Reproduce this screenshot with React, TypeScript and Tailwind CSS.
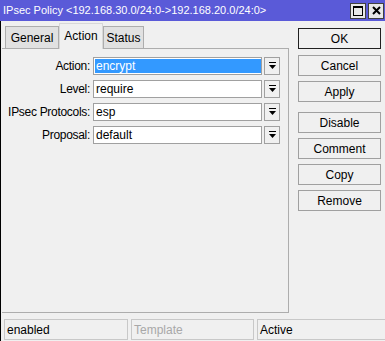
import React from "react";

const DropIcon = () => (
  <svg width="9" height="9" viewBox="0 0 9 9">
    <rect x="1" y="1" width="7" height="1" fill="#000" />
    <path d="M1 4h7L4.5 8z" fill="#000" />
  </svg>
);

const fields = [
  { label: "Action:", value: "encrypt", selected: true },
  { label: "Level:", value: "require" },
  { label: "IPsec Protocols:", value: "esp" },
  { label: "Proposal:", value: "default" },
];

const App = () => {
  return (
    <div
      className="w-[385px] h-[341px] bg-[#f0f0f0] flex flex-col overflow-hidden text-[11px] text-black"
      style={{ fontFamily: '"Liberation Sans", Arial, sans-serif' }}
    >
      {/* title bar */}
      <div className="h-[21px] bg-[#5a5ad8] flex items-center pl-[3px] pr-[1px] text-white text-[11px] shrink-0">
        <span className="flex-1 truncate">IPsec Policy &lt;192.168.30.0/24:0-&gt;192.168.20.0/24:0&gt;</span>
        <div className="flex gap-[2px]">
          <div className="w-[16px] h-[16px] bg-[#e8e8e8] border border-[#404040] flex items-center justify-center">
            <div className="w-[10px] h-[10px] border border-black border-t-2" />
          </div>
          <div className="w-[16px] h-[16px] bg-[#e8e8e8] border border-[#404040] flex items-center justify-center">
            <svg width="9" height="9" viewBox="0 0 9 9">
              <path d="M1 1L8 8M8 1L1 8" stroke="#000" strokeWidth="2" />
            </svg>
          </div>
        </div>
      </div>

      <div className="flex flex-1 border-l border-black">
        {/* left: tabs + panel */}
        <div className="flex flex-col w-[287px] ml-[1px] pt-[1px]">
          <div className="flex items-end h-[26px] pl-[3px]">
            <div className="h-[22px] w-[54px] flex items-center justify-center bg-[#e1e1e1] border border-b-0 border-[#adadad] text-[12px]">General</div>
            <div className="h-[26px] w-[44px] flex items-start justify-center pt-[3px] bg-[#f0f0f0] border border-b-0 border-[#d8d8d8] -mb-px relative z-10 text-[12px]">Action</div>
            <div className="h-[22px] w-[41px] flex items-center justify-center bg-[#e1e1e1] border border-b-0 border-[#adadad] text-[12px]">Status</div>
          </div>
          <div className="flex-1 border border-[#adadad] border-l-0 pt-[8px] flex flex-col gap-[6px]">
            {fields.map((f) => (
              <div key={f.label} className="flex items-center h-[17px]">
                <span className="w-[91px] text-right pr-[3px] whitespace-nowrap text-[12px] tracking-[-0.3px]">{f.label}</span>
                <div className="w-[169px] h-[18px] border border-[#a0a0a0] bg-white flex items-center pl-[1px]">
                  <span
                    className={`h-[14px] leading-[14px] px-[1px] text-[12px] ${
                      f.selected ? "bg-[#3399ff] text-white w-full" : ""
                    }`}
                  >
                    {f.value}
                  </span>
                </div>
                <div className="ml-[2px] w-[16px] h-[18px] border border-[#a0a0a0] bg-[#f0f0f0] flex items-center justify-center">
                  <DropIcon />
                </div>
              </div>
            ))}
          </div>
        </div>

        {/* right: buttons */}
        <div className="flex flex-col ml-[9px] pt-[7px] w-[83px] text-[12px]">
          <div className="h-[21px] flex items-center justify-center border border-[#202020]">OK</div>
          <div className="h-[21px] mt-[6px] flex items-center justify-center border border-[#a0a0a0]">Cancel</div>
          <div className="h-[21px] mt-[5px] flex items-center justify-center border border-[#a0a0a0]">Apply</div>
          {["Disable", "Comment", "Copy", "Remove"].map((t, i) => (
            <div
              key={t}
              className={`h-[21px] flex items-center justify-center border border-[#a0a0a0] ${
                i === 0 ? "mt-[10px]" : "mt-[5px]"
              }`}
            >
              {t}
            </div>
          ))}
        </div>
      </div>

      {/* status bar */}
      <div className="h-[28px] flex items-end pb-[1px] pl-[3px] gap-[3px] shrink-0 border-l border-black text-[12px]">
        <div className="w-[124px] h-[21px] border border-[#c8c8c8] flex items-center pl-[2px]">enabled</div>
        <div className="w-[123px] h-[21px] border border-[#c8c8c8] flex items-center pl-[2px] text-[#a8a8a8]">Template</div>
        <div className="flex-1 h-[21px] border border-[#c8c8c8] border-r-0 flex items-center pl-[2px]">Active</div>
      </div>
    </div>
  );
};

export default App;
